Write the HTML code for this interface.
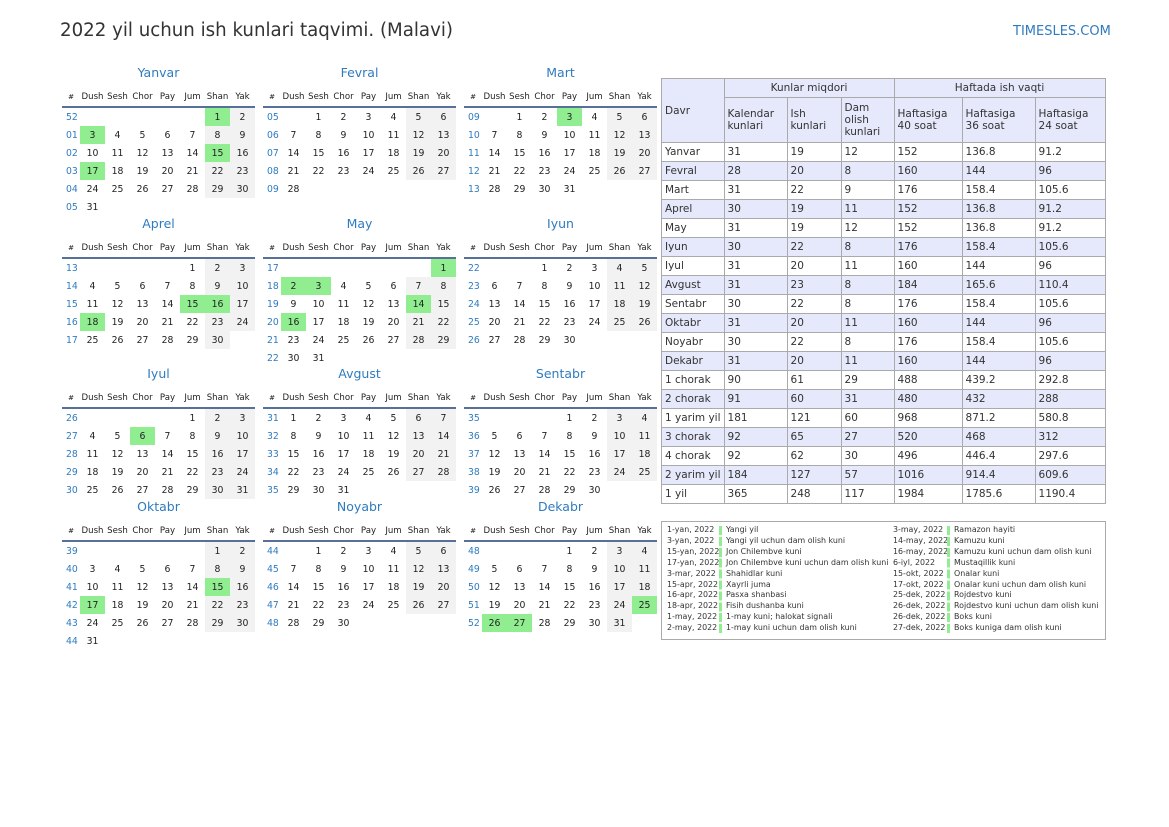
<!DOCTYPE html>
<html><head><meta charset="utf-8"><style>
body{margin:0;width:1169px;height:827px;background:#fff;position:relative;font-family:"DejaVu Sans","Liberation Sans",sans-serif;color:#222;overflow:hidden}
.h1{position:absolute;left:60px;top:20px;font-size:18.2px;color:#333}
.logo{position:absolute;left:1013px;top:24px;font-size:13px;color:#2f7bbf}
.m{position:absolute;width:193px}
.m .t{height:24px;line-height:18px;text-align:center;font-size:12.5px;color:#2f7bbf}
.m table{border-collapse:collapse;table-layout:fixed;width:193px;font-size:9.3px}
.m col.w{width:18px}
.m th{font-weight:normal;height:18px;padding:0;font-size:8.6px;border-bottom:2px solid #56709a;color:#222;white-space:nowrap}
.m th:first-child{font-size:7px}
.m td{height:18px;padding:0;text-align:center}
.m td:first-child{color:#2f7bbf;text-align:left;padding-left:4px}
.m td.s{background:#f2f2f2}
.m td.g{background:#90ee90}
.r{position:absolute;left:661px;top:78px;border-collapse:collapse;font-size:10.5px;color:#333;table-layout:fixed}
.r td{border:1px solid #aaa;padding:0 3px;height:18px;white-space:nowrap}
.r .hd td{background:#e6e9fb;white-space:normal}
.r tr.b td{background:#e6e9fb}
.r .c{text-align:center}
.hol{position:absolute;left:661px;top:521px;width:443px;height:117px;border:1px solid #aaa;font-size:7.9px;color:#333}
.hol div{position:absolute;line-height:10.9px;white-space:nowrap}
.bar{position:absolute;width:3px;height:108px;background:repeating-linear-gradient(#90ee90 0 9px,#fff 9px 10.9px)}
</style></head><body>
<div class="h1">2022 yil uchun ish kunlari taqvimi. (Malavi)</div>
<div class="logo">TIMESLES.COM</div>

<div class="m" style="left:62px;top:64px"><div class="t">Yanvar</div><table><col class="w"><col><col><col><col><col><col><col>
<tr><th>#</th><th>Dush</th><th>Sesh</th><th>Chor</th><th>Pay</th><th>Jum</th><th>Shan</th><th>Yak</th></tr>
<tr><td>52</td><td></td><td></td><td></td><td></td><td></td><td class="g">1</td><td class="s">2</td></tr>
<tr><td>01</td><td class="g">3</td><td>4</td><td>5</td><td>6</td><td>7</td><td class="s">8</td><td class="s">9</td></tr>
<tr><td>02</td><td>10</td><td>11</td><td>12</td><td>13</td><td>14</td><td class="g">15</td><td class="s">16</td></tr>
<tr><td>03</td><td class="g">17</td><td>18</td><td>19</td><td>20</td><td>21</td><td class="s">22</td><td class="s">23</td></tr>
<tr><td>04</td><td>24</td><td>25</td><td>26</td><td>27</td><td>28</td><td class="s">29</td><td class="s">30</td></tr>
<tr><td>05</td><td>31</td><td></td><td></td><td></td><td></td><td></td><td></td></tr></table></div>

<div class="m" style="left:263px;top:64px"><div class="t">Fevral</div><table><col class="w"><col><col><col><col><col><col><col>
<tr><th>#</th><th>Dush</th><th>Sesh</th><th>Chor</th><th>Pay</th><th>Jum</th><th>Shan</th><th>Yak</th></tr>
<tr><td>05</td><td></td><td>1</td><td>2</td><td>3</td><td>4</td><td class="s">5</td><td class="s">6</td></tr>
<tr><td>06</td><td>7</td><td>8</td><td>9</td><td>10</td><td>11</td><td class="s">12</td><td class="s">13</td></tr>
<tr><td>07</td><td>14</td><td>15</td><td>16</td><td>17</td><td>18</td><td class="s">19</td><td class="s">20</td></tr>
<tr><td>08</td><td>21</td><td>22</td><td>23</td><td>24</td><td>25</td><td class="s">26</td><td class="s">27</td></tr>
<tr><td>09</td><td>28</td><td></td><td></td><td></td><td></td><td></td><td></td></tr></table></div>

<div class="m" style="left:464px;top:64px"><div class="t">Mart</div><table><col class="w"><col><col><col><col><col><col><col>
<tr><th>#</th><th>Dush</th><th>Sesh</th><th>Chor</th><th>Pay</th><th>Jum</th><th>Shan</th><th>Yak</th></tr>
<tr><td>09</td><td></td><td>1</td><td>2</td><td class="g">3</td><td>4</td><td class="s">5</td><td class="s">6</td></tr>
<tr><td>10</td><td>7</td><td>8</td><td>9</td><td>10</td><td>11</td><td class="s">12</td><td class="s">13</td></tr>
<tr><td>11</td><td>14</td><td>15</td><td>16</td><td>17</td><td>18</td><td class="s">19</td><td class="s">20</td></tr>
<tr><td>12</td><td>21</td><td>22</td><td>23</td><td>24</td><td>25</td><td class="s">26</td><td class="s">27</td></tr>
<tr><td>13</td><td>28</td><td>29</td><td>30</td><td>31</td><td></td><td></td><td></td></tr></table></div>

<div class="m" style="left:62px;top:215px"><div class="t">Aprel</div><table><col class="w"><col><col><col><col><col><col><col>
<tr><th>#</th><th>Dush</th><th>Sesh</th><th>Chor</th><th>Pay</th><th>Jum</th><th>Shan</th><th>Yak</th></tr>
<tr><td>13</td><td></td><td></td><td></td><td></td><td>1</td><td class="s">2</td><td class="s">3</td></tr>
<tr><td>14</td><td>4</td><td>5</td><td>6</td><td>7</td><td>8</td><td class="s">9</td><td class="s">10</td></tr>
<tr><td>15</td><td>11</td><td>12</td><td>13</td><td>14</td><td class="g">15</td><td class="g">16</td><td class="s">17</td></tr>
<tr><td>16</td><td class="g">18</td><td>19</td><td>20</td><td>21</td><td>22</td><td class="s">23</td><td class="s">24</td></tr>
<tr><td>17</td><td>25</td><td>26</td><td>27</td><td>28</td><td>29</td><td class="s">30</td><td></td></tr></table></div>

<div class="m" style="left:263px;top:215px"><div class="t">May</div><table><col class="w"><col><col><col><col><col><col><col>
<tr><th>#</th><th>Dush</th><th>Sesh</th><th>Chor</th><th>Pay</th><th>Jum</th><th>Shan</th><th>Yak</th></tr>
<tr><td>17</td><td></td><td></td><td></td><td></td><td></td><td></td><td class="g">1</td></tr>
<tr><td>18</td><td class="g">2</td><td class="g">3</td><td>4</td><td>5</td><td>6</td><td class="s">7</td><td class="s">8</td></tr>
<tr><td>19</td><td>9</td><td>10</td><td>11</td><td>12</td><td>13</td><td class="g">14</td><td class="s">15</td></tr>
<tr><td>20</td><td class="g">16</td><td>17</td><td>18</td><td>19</td><td>20</td><td class="s">21</td><td class="s">22</td></tr>
<tr><td>21</td><td>23</td><td>24</td><td>25</td><td>26</td><td>27</td><td class="s">28</td><td class="s">29</td></tr>
<tr><td>22</td><td>30</td><td>31</td><td></td><td></td><td></td><td></td><td></td></tr></table></div>

<div class="m" style="left:464px;top:215px"><div class="t">Iyun</div><table><col class="w"><col><col><col><col><col><col><col>
<tr><th>#</th><th>Dush</th><th>Sesh</th><th>Chor</th><th>Pay</th><th>Jum</th><th>Shan</th><th>Yak</th></tr>
<tr><td>22</td><td></td><td></td><td>1</td><td>2</td><td>3</td><td class="s">4</td><td class="s">5</td></tr>
<tr><td>23</td><td>6</td><td>7</td><td>8</td><td>9</td><td>10</td><td class="s">11</td><td class="s">12</td></tr>
<tr><td>24</td><td>13</td><td>14</td><td>15</td><td>16</td><td>17</td><td class="s">18</td><td class="s">19</td></tr>
<tr><td>25</td><td>20</td><td>21</td><td>22</td><td>23</td><td>24</td><td class="s">25</td><td class="s">26</td></tr>
<tr><td>26</td><td>27</td><td>28</td><td>29</td><td>30</td><td></td><td></td><td></td></tr></table></div>

<div class="m" style="left:62px;top:365px"><div class="t">Iyul</div><table><col class="w"><col><col><col><col><col><col><col>
<tr><th>#</th><th>Dush</th><th>Sesh</th><th>Chor</th><th>Pay</th><th>Jum</th><th>Shan</th><th>Yak</th></tr>
<tr><td>26</td><td></td><td></td><td></td><td></td><td>1</td><td class="s">2</td><td class="s">3</td></tr>
<tr><td>27</td><td>4</td><td>5</td><td class="g">6</td><td>7</td><td>8</td><td class="s">9</td><td class="s">10</td></tr>
<tr><td>28</td><td>11</td><td>12</td><td>13</td><td>14</td><td>15</td><td class="s">16</td><td class="s">17</td></tr>
<tr><td>29</td><td>18</td><td>19</td><td>20</td><td>21</td><td>22</td><td class="s">23</td><td class="s">24</td></tr>
<tr><td>30</td><td>25</td><td>26</td><td>27</td><td>28</td><td>29</td><td class="s">30</td><td class="s">31</td></tr></table></div>

<div class="m" style="left:263px;top:365px"><div class="t">Avgust</div><table><col class="w"><col><col><col><col><col><col><col>
<tr><th>#</th><th>Dush</th><th>Sesh</th><th>Chor</th><th>Pay</th><th>Jum</th><th>Shan</th><th>Yak</th></tr>
<tr><td>31</td><td>1</td><td>2</td><td>3</td><td>4</td><td>5</td><td class="s">6</td><td class="s">7</td></tr>
<tr><td>32</td><td>8</td><td>9</td><td>10</td><td>11</td><td>12</td><td class="s">13</td><td class="s">14</td></tr>
<tr><td>33</td><td>15</td><td>16</td><td>17</td><td>18</td><td>19</td><td class="s">20</td><td class="s">21</td></tr>
<tr><td>34</td><td>22</td><td>23</td><td>24</td><td>25</td><td>26</td><td class="s">27</td><td class="s">28</td></tr>
<tr><td>35</td><td>29</td><td>30</td><td>31</td><td></td><td></td><td></td><td></td></tr></table></div>

<div class="m" style="left:464px;top:365px"><div class="t">Sentabr</div><table><col class="w"><col><col><col><col><col><col><col>
<tr><th>#</th><th>Dush</th><th>Sesh</th><th>Chor</th><th>Pay</th><th>Jum</th><th>Shan</th><th>Yak</th></tr>
<tr><td>35</td><td></td><td></td><td></td><td>1</td><td>2</td><td class="s">3</td><td class="s">4</td></tr>
<tr><td>36</td><td>5</td><td>6</td><td>7</td><td>8</td><td>9</td><td class="s">10</td><td class="s">11</td></tr>
<tr><td>37</td><td>12</td><td>13</td><td>14</td><td>15</td><td>16</td><td class="s">17</td><td class="s">18</td></tr>
<tr><td>38</td><td>19</td><td>20</td><td>21</td><td>22</td><td>23</td><td class="s">24</td><td class="s">25</td></tr>
<tr><td>39</td><td>26</td><td>27</td><td>28</td><td>29</td><td>30</td><td></td><td></td></tr></table></div>

<div class="m" style="left:62px;top:498px"><div class="t">Oktabr</div><table><col class="w"><col><col><col><col><col><col><col>
<tr><th>#</th><th>Dush</th><th>Sesh</th><th>Chor</th><th>Pay</th><th>Jum</th><th>Shan</th><th>Yak</th></tr>
<tr><td>39</td><td></td><td></td><td></td><td></td><td></td><td class="s">1</td><td class="s">2</td></tr>
<tr><td>40</td><td>3</td><td>4</td><td>5</td><td>6</td><td>7</td><td class="s">8</td><td class="s">9</td></tr>
<tr><td>41</td><td>10</td><td>11</td><td>12</td><td>13</td><td>14</td><td class="g">15</td><td class="s">16</td></tr>
<tr><td>42</td><td class="g">17</td><td>18</td><td>19</td><td>20</td><td>21</td><td class="s">22</td><td class="s">23</td></tr>
<tr><td>43</td><td>24</td><td>25</td><td>26</td><td>27</td><td>28</td><td class="s">29</td><td class="s">30</td></tr>
<tr><td>44</td><td>31</td><td></td><td></td><td></td><td></td><td></td><td></td></tr></table></div>

<div class="m" style="left:263px;top:498px"><div class="t">Noyabr</div><table><col class="w"><col><col><col><col><col><col><col>
<tr><th>#</th><th>Dush</th><th>Sesh</th><th>Chor</th><th>Pay</th><th>Jum</th><th>Shan</th><th>Yak</th></tr>
<tr><td>44</td><td></td><td>1</td><td>2</td><td>3</td><td>4</td><td class="s">5</td><td class="s">6</td></tr>
<tr><td>45</td><td>7</td><td>8</td><td>9</td><td>10</td><td>11</td><td class="s">12</td><td class="s">13</td></tr>
<tr><td>46</td><td>14</td><td>15</td><td>16</td><td>17</td><td>18</td><td class="s">19</td><td class="s">20</td></tr>
<tr><td>47</td><td>21</td><td>22</td><td>23</td><td>24</td><td>25</td><td class="s">26</td><td class="s">27</td></tr>
<tr><td>48</td><td>28</td><td>29</td><td>30</td><td></td><td></td><td></td><td></td></tr></table></div>

<div class="m" style="left:464px;top:498px"><div class="t">Dekabr</div><table><col class="w"><col><col><col><col><col><col><col>
<tr><th>#</th><th>Dush</th><th>Sesh</th><th>Chor</th><th>Pay</th><th>Jum</th><th>Shan</th><th>Yak</th></tr>
<tr><td>48</td><td></td><td></td><td></td><td>1</td><td>2</td><td class="s">3</td><td class="s">4</td></tr>
<tr><td>49</td><td>5</td><td>6</td><td>7</td><td>8</td><td>9</td><td class="s">10</td><td class="s">11</td></tr>
<tr><td>50</td><td>12</td><td>13</td><td>14</td><td>15</td><td>16</td><td class="s">17</td><td class="s">18</td></tr>
<tr><td>51</td><td>19</td><td>20</td><td>21</td><td>22</td><td>23</td><td class="s">24</td><td class="g">25</td></tr>
<tr><td>52</td><td class="g">26</td><td class="g">27</td><td>28</td><td>29</td><td>30</td><td class="s">31</td><td></td></tr></table></div>

<table class="r">
<col style="width:59px"><col style="width:63px"><col style="width:54px"><col style="width:53px"><col style="width:68px"><col style="width:73px"><col style="width:70px">
<tr class="hd" style="height:19px"><td rowspan="2">Davr</td><td colspan="3" class="c">Kunlar miqdori</td><td colspan="3" class="c">Haftada ish vaqti</td></tr>
<tr class="hd" style="height:45px"><td>Kalendar kunlari</td><td>Ish kunlari</td><td>Dam olish kunlari</td><td>Haftasiga 40 soat</td><td>Haftasiga 36 soat</td><td>Haftasiga 24 soat</td></tr>
<tr><td>Yanvar</td><td>31</td><td>19</td><td>12</td><td>152</td><td>136.8</td><td>91.2</td></tr>
<tr class="b"><td>Fevral</td><td>28</td><td>20</td><td>8</td><td>160</td><td>144</td><td>96</td></tr>
<tr><td>Mart</td><td>31</td><td>22</td><td>9</td><td>176</td><td>158.4</td><td>105.6</td></tr>
<tr class="b"><td>Aprel</td><td>30</td><td>19</td><td>11</td><td>152</td><td>136.8</td><td>91.2</td></tr>
<tr><td>May</td><td>31</td><td>19</td><td>12</td><td>152</td><td>136.8</td><td>91.2</td></tr>
<tr class="b"><td>Iyun</td><td>30</td><td>22</td><td>8</td><td>176</td><td>158.4</td><td>105.6</td></tr>
<tr><td>Iyul</td><td>31</td><td>20</td><td>11</td><td>160</td><td>144</td><td>96</td></tr>
<tr class="b"><td>Avgust</td><td>31</td><td>23</td><td>8</td><td>184</td><td>165.6</td><td>110.4</td></tr>
<tr><td>Sentabr</td><td>30</td><td>22</td><td>8</td><td>176</td><td>158.4</td><td>105.6</td></tr>
<tr class="b"><td>Oktabr</td><td>31</td><td>20</td><td>11</td><td>160</td><td>144</td><td>96</td></tr>
<tr><td>Noyabr</td><td>30</td><td>22</td><td>8</td><td>176</td><td>158.4</td><td>105.6</td></tr>
<tr class="b"><td>Dekabr</td><td>31</td><td>20</td><td>11</td><td>160</td><td>144</td><td>96</td></tr>
<tr><td>1 chorak</td><td>90</td><td>61</td><td>29</td><td>488</td><td>439.2</td><td>292.8</td></tr>
<tr class="b"><td>2 chorak</td><td>91</td><td>60</td><td>31</td><td>480</td><td>432</td><td>288</td></tr>
<tr><td>1 yarim yil</td><td>181</td><td>121</td><td>60</td><td>968</td><td>871.2</td><td>580.8</td></tr>
<tr class="b"><td>3 chorak</td><td>92</td><td>65</td><td>27</td><td>520</td><td>468</td><td>312</td></tr>
<tr><td>4 chorak</td><td>92</td><td>62</td><td>30</td><td>496</td><td>446.4</td><td>297.6</td></tr>
<tr class="b"><td>2 yarim yil</td><td>184</td><td>127</td><td>57</td><td>1016</td><td>914.4</td><td>609.6</td></tr>
<tr><td>1 yil</td><td>365</td><td>248</td><td>117</td><td>1984</td><td>1785.6</td><td>1190.4</td></tr>
</table>

<div class="hol">
<div style="left:5px;top:3px">1-yan, 2022<br>3-yan, 2022<br>15-yan, 2022<br>17-yan, 2022<br>3-mar, 2022<br>15-apr, 2022<br>16-apr, 2022<br>18-apr, 2022<br>1-may, 2022<br>2-may, 2022</div>
<span class="bar" style="left:57px;top:4px"></span>
<div style="left:64px;top:3px">Yangi yil<br>Yangi yil uchun dam olish kuni<br>Jon Chilembve kuni<br>Jon Chilembve kuni uchun dam olish kuni<br>Shahidlar kuni<br>Xayrli juma<br>Pasxa shanbasi<br>Fisih dushanba kuni<br>1-may kuni; halokat signali<br>1-may kuni uchun dam olish kuni</div>
<div style="left:231px;top:3px">3-may, 2022<br>14-may, 2022<br>16-may, 2022<br>6-iyl, 2022<br>15-okt, 2022<br>17-okt, 2022<br>25-dek, 2022<br>26-dek, 2022<br>26-dek, 2022<br>27-dek, 2022</div>
<span class="bar" style="left:285px;top:4px"></span>
<div style="left:292px;top:3px">Ramazon hayiti<br>Kamuzu kuni<br>Kamuzu kuni uchun dam olish kuni<br>Mustaqillik kuni<br>Onalar kuni<br>Onalar kuni uchun dam olish kuni<br>Rojdestvo kuni<br>Rojdestvo kuni uchun dam olish kuni<br>Boks kuni<br>Boks kuniga dam olish kuni</div>
</div>
</body></html>
